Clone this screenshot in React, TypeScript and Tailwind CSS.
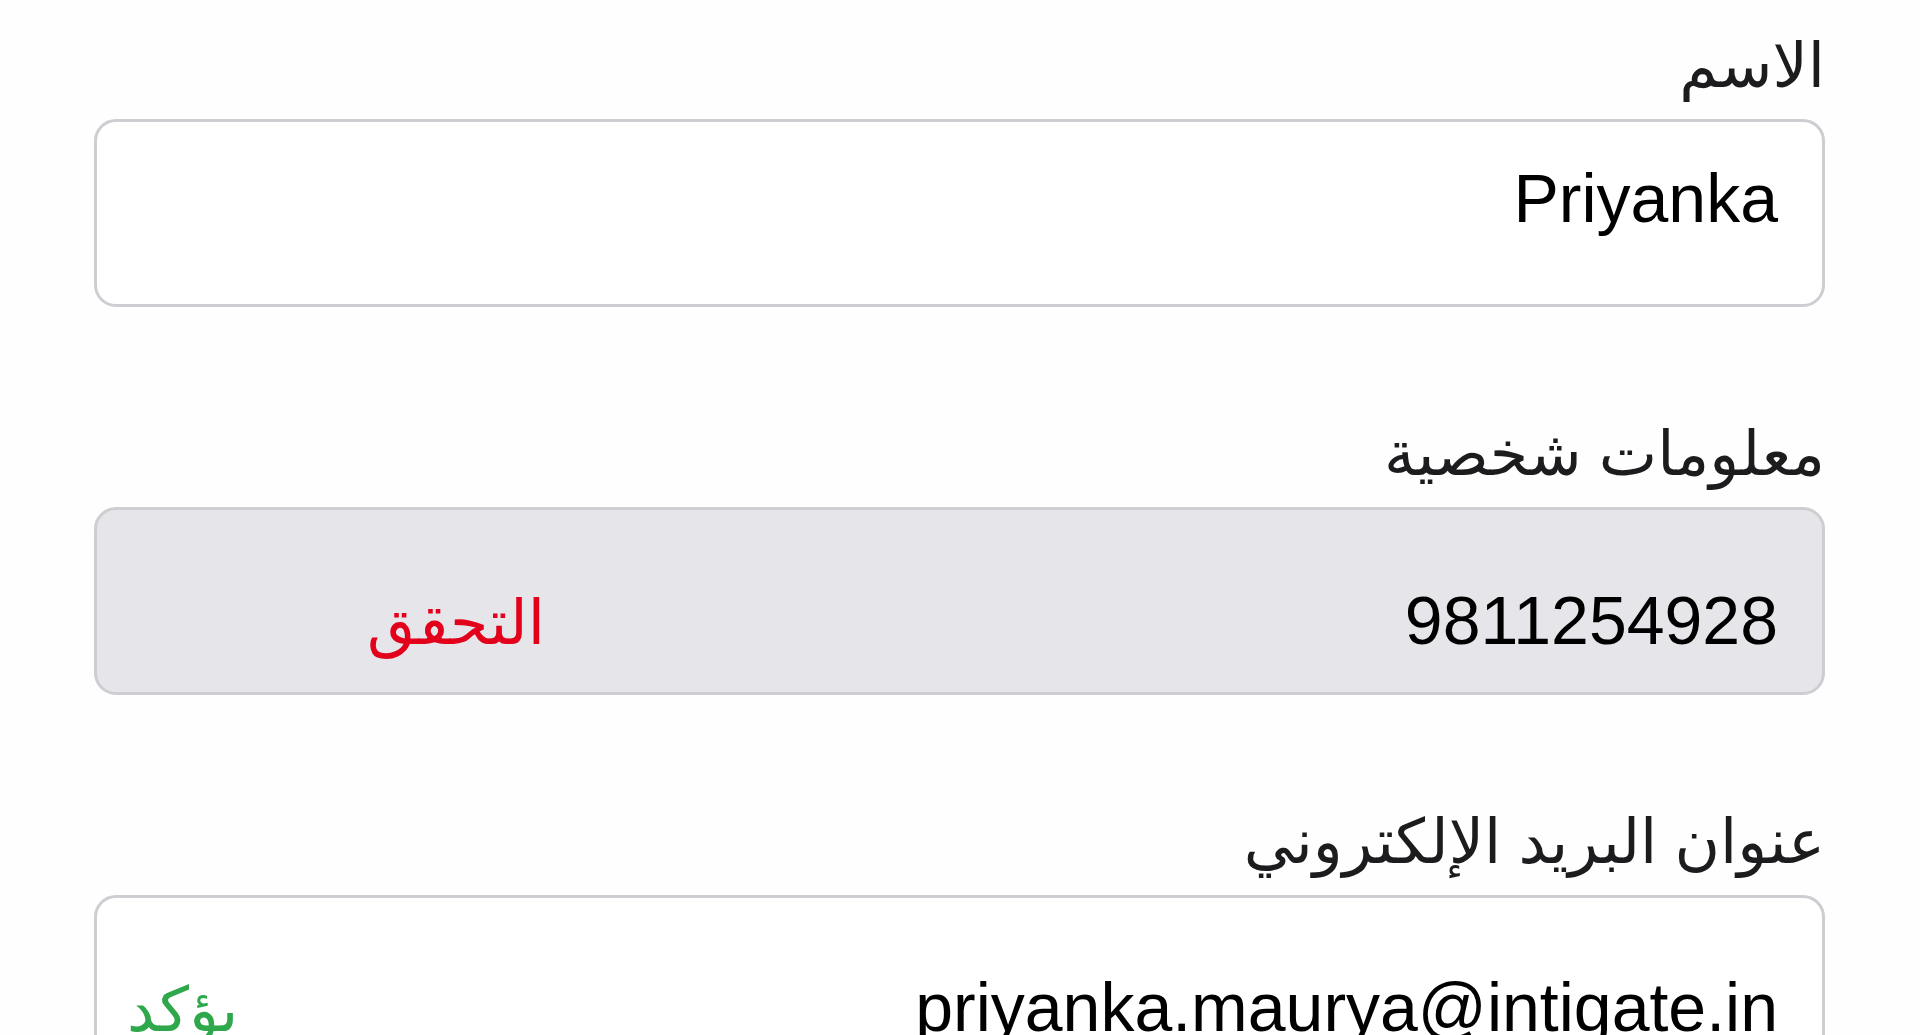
import React from 'react';

const FONT = "font-['Liberation_Sans','DejaVu_Sans',sans-serif]";

interface Field {
  label: string;
  value: string;
  filled: boolean;
  action?: { text: string; color: string; offset: string };
  padTop: string;
}

const FIELDS: Field[] = [
  { label: 'الاسم', value: 'Priyanka', filled: false, padTop: 'pt-[42px]' },
  {
    label: 'معلومات شخصية',
    value: '9811254928',
    filled: true,
    padTop: 'pt-[76px]',
    action: { text: 'التحقق', color: 'text-[#e3001b]', offset: 'ml-[270px]' },
  },
  {
    label: 'عنوان البريد الإلكتروني',
    value: 'priyanka.maurya@intigate.in',
    filled: false,
    padTop: 'pt-[75px]',
    action: { text: 'يؤكد', color: 'text-[#2fa84c]', offset: 'ml-[30px]' },
  },
];

function FormField({ field }: { field: Field }) {
  return (
    <div className="flex flex-col">
      <div className="text-[62px] leading-none text-[#1c1c1e] mb-[22px]">{field.label}</div>
      <div
        className={`h-[188px] rounded-[22px] border-[3px] border-[#cdcdd2] ${
          field.filled ? 'bg-[#e5e5ea]' : 'bg-white'
        } flex items-baseline justify-between pr-[44px] ${field.padTop}`}
      >
        <span dir="ltr" className="text-[68px] leading-none text-black">
          {field.value}
        </span>
        {field.action && (
          <span className={`text-[62px] leading-none ${field.action.color} ${field.action.offset}`}>
            {field.action.text}
          </span>
        )}
      </div>
    </div>
  );
}

export default function App() {
  return (
    <div dir="rtl" className={`w-[1920px] h-[1035px] overflow-hidden bg-[#fefefe] ${FONT}`}>
      <div className="flex flex-col gap-[116px] pt-[35px] pl-[94px] pr-[95px]">
        {FIELDS.map((f, i) => (
          <FormField key={i} field={f} />
        ))}
      </div>
    </div>
  );
}
